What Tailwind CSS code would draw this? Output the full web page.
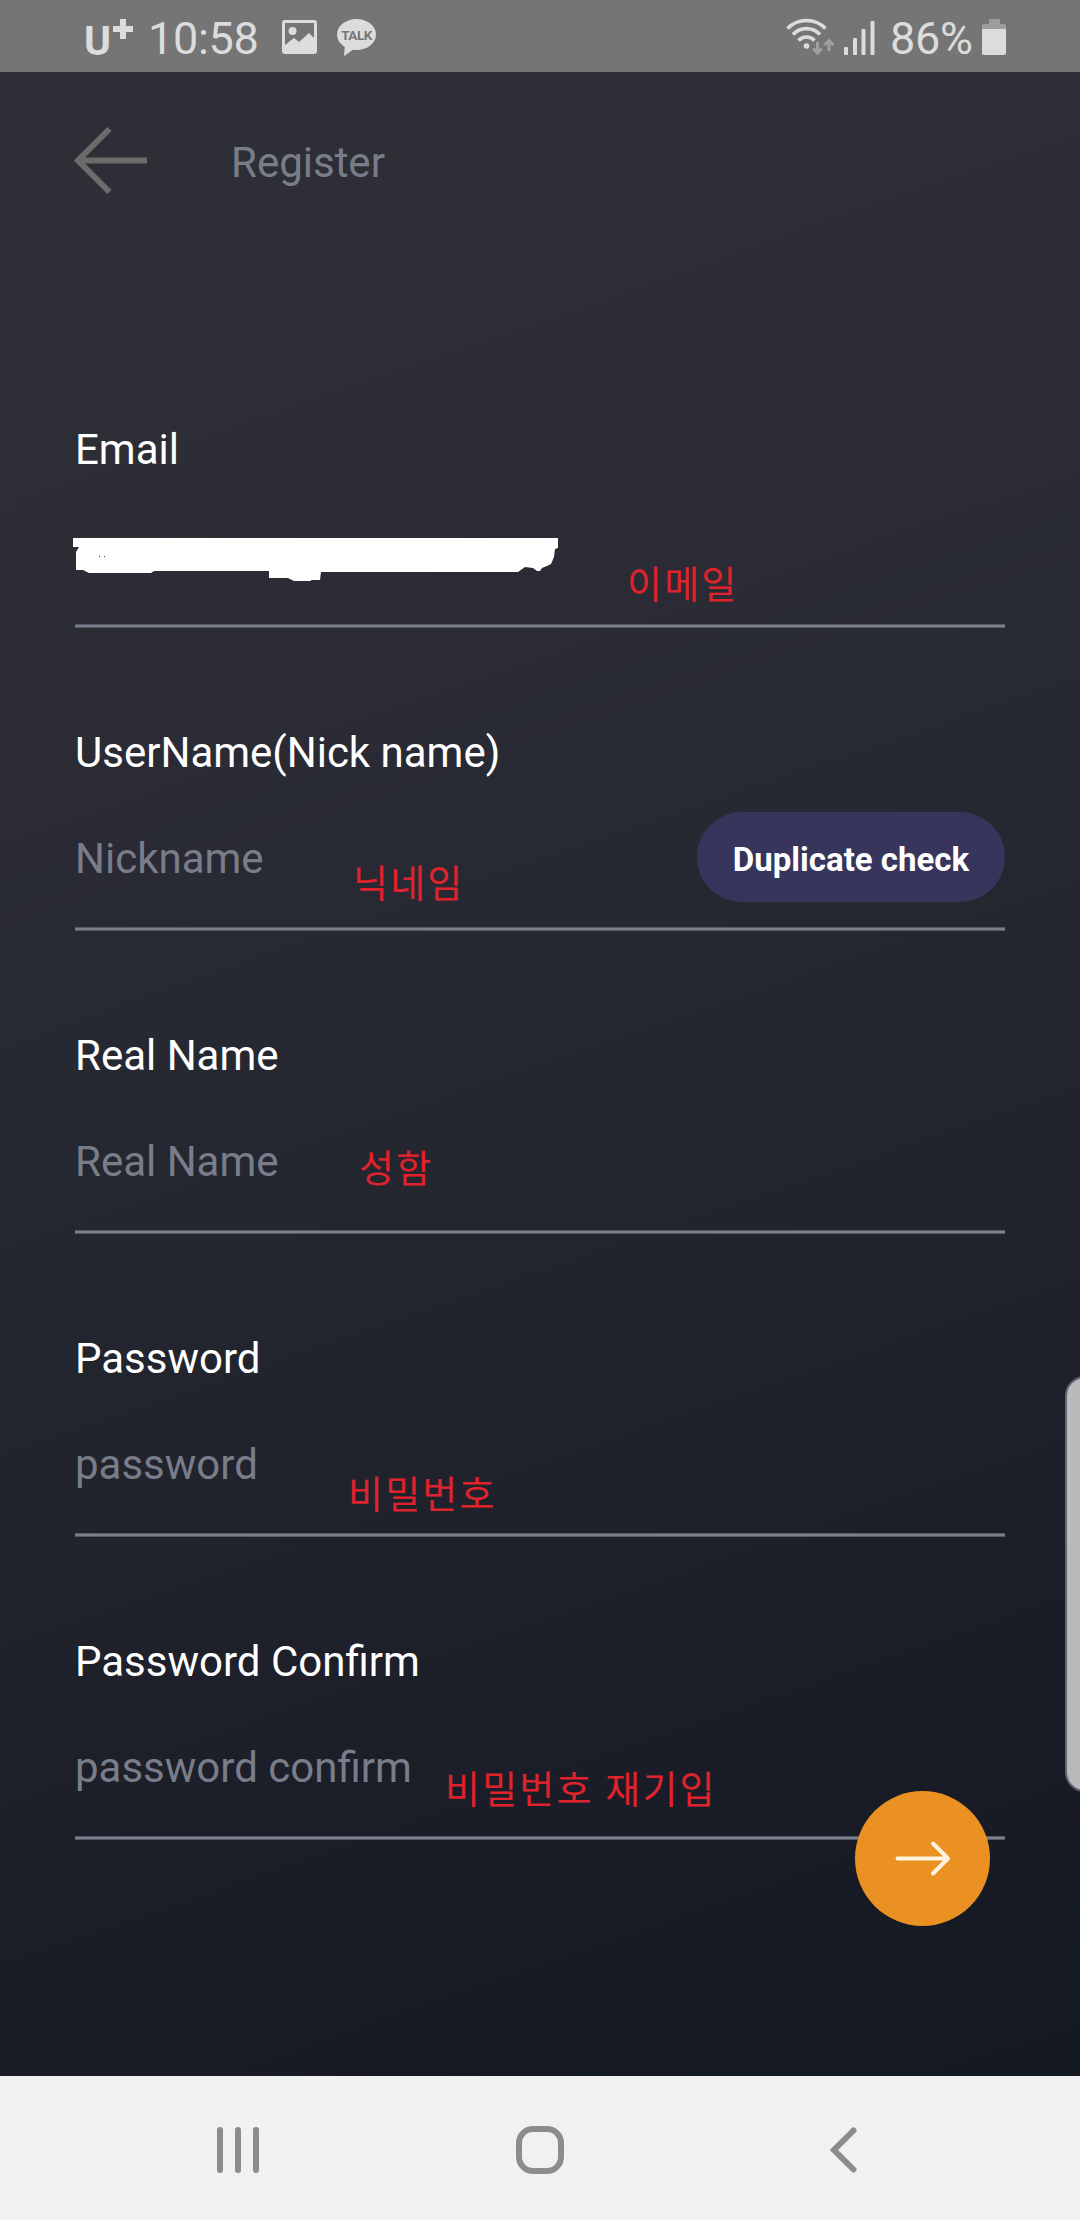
<!DOCTYPE html>
<html lang="ko">
<head>
    <meta charset="UTF-8">
    <title>Register</title>
    <script src="https://cdn.jsdelivr.net/npm/@tailwindcss/browser@4"></script>
</head>
<body class="font-['Roboto','Noto_Sans_CJK_KR',sans-serif]">
    <div class="relative flex flex-col w-[1080px] h-[2220px] overflow-hidden bg-[linear-gradient(161deg,#2f2f38_0%,#2d2d36_22%,#272932_42%,#20222c_62%,#191c26_80%,#121720_100%)]">
        <!-- Status bar -->
        <div class="flex items-start justify-between h-[72px] shrink-0 bg-[#757575] text-[#dcdcdc] pl-[84px] pr-[74px]">
            <div class="flex items-start">
                <div class="relative w-[64px] h-[72px]">
                    <span class="block pt-[13px] text-[41px] leading-[56px] font-bold">U</span>
                    <svg class="absolute left-[29px] top-[19px]" width="20" height="20" fill="#dcdcdc"><path d="M7 0h6v7h7v6h-7v7H7v-7H0V7h7z"/></svg>
                </div>
                <span class="pt-[11px] w-[134px] text-[45px] leading-[56px] tracking-[-0.3px] whitespace-nowrap">10:58</span>
                <!-- Picture icon -->
                <svg class="mt-5" width="35" height="34" viewBox="0 0 35 34">
                    <path fill="#dcdcdc" fill-rule="evenodd" d="M3 0h29a3 3 0 0 1 3 3v28a3 3 0 0 1-3 3H3a3 3 0 0 1-3-3V3a3 3 0 0 1 3-3zM3 3v22l9-7 5 4 10-9 5 5V3z"/>
                    <circle cx="10.500" cy="11" r="4" fill="#dcdcdc"/>
                </svg>
                <!-- Talk bubble -->
                <div class="relative ml-[20px] mt-[19px] w-[39px] h-[38px]">
                    <svg width="39" height="38" fill="#dcdcdc"><ellipse cx="19.500" cy="15.500" rx="19.500" ry="15.500"/><path d="M8 26L7 37l10-7z"/></svg>
                    <span class="absolute left-0 top-[8px] w-[39px] text-center text-[13.5px] leading-4 font-bold tracking-[-0.5px] text-[#757575]">TALK</span>
                </div>
            </div>
            <div class="flex items-start">
                <!-- Wifi with traffic arrows -->
                <svg width="50" height="60" viewBox="785 0 50 60" fill="none">
                    <g stroke="#dcdcdc" stroke-width="3.600">
                        <path d="M787.500 28.500a26.500 26.500 0 0 1 38 0"/>
                        <path d="M793 34.500a18.500 18.500 0 0 1 27 0"/>
                        <path d="M798.500 40.500a11 11 0 0 1 16 0"/>
                    </g>
                    <circle cx="806.500" cy="46" r="2.800" fill="#dcdcdc"/>
                    <g stroke="#a0a0a0" stroke-width="3">
                        <path d="M817.500 42v11M813.300 48.500l4.200 4.500 4.200-4.500"/>
                        <path d="M829 51V40.500M824.500 45l4.500-4.500 4.500 4.500"/>
                    </g>
                </svg>
                <!-- Signal bars -->
                <svg class="ml-[9px]" width="31" height="60" fill="#dcdcdc">
                    <rect x="0" y="47" width="4" height="8" rx="1"/>
                    <rect x="9" y="38" width="4" height="17" rx="1"/>
                    <rect x="17.500" y="29" width="4" height="26" rx="1"/>
                    <rect x="26.500" y="21" width="4" height="34" rx="1"/>
                </svg>
                <span class="pt-[11px] ml-[15px] w-[92px] text-[45px] leading-[56px] tracking-[-0.3px] whitespace-nowrap">86%</span>
                <svg class="mt-[19px]" width="24" height="36">
                    <path fill="#9d9d9d" d="M7 0h11v5h4a2 2 0 0 1 2 2v4H0V7a2 2 0 0 1 2-2h5z"/>
                    <path fill="#dcdcdc" d="M0 10h24v24a2 2 0 0 1-2 2H2a2 2 0 0 1-2-2z"/>
                </svg>
            </div>
        </div>

        <!-- Header with the back arrow -->
        <div class="flex items-start h-[253px] shrink-0 pl-[73px]">
            <svg class="mt-[53px]" width="75" height="72" viewBox="0 0 75 72" fill="none" stroke="#6b6b6a" stroke-width="6"><path d="M74 35.500H6M36.500 4L5 35.500 36.500 67"/></svg>
            <h1 class="ml-[83px] mt-[66px] text-[42px] leading-[50px] text-[#797d89]">Register</h1>
        </div>

        <!-- Form fields -->
        <div class="flex flex-col px-[75px] flex-1">
            <div class="relative h-[303px] pt-[100px]">
                <label class="block text-[42px] leading-[50px] text-white">Email</label>
                <div class="mt-[34px] h-[90px]">
                    <!-- Scribbled out address -->
                    <svg class="relative left-[-2px] top-[29px]" width="485" height="44" fill="#fff">
                        <path d="M0 0h485v10l-3 1-1 8-3 7-4 2-5 2-2 3h-3l-4-3-8-1-7 5H248l-1 8h-9v1h-17l-6-3h-19v-7H81l-3 2H16l-6-3H3V14l3-5H0z"/>
                        <path fill="#333" d="M26 18h1v1h-1zM31 18h1v1h-1z"/>
                    </svg>
                </div>
                <div class="mt-[25px] h-1 bg-[#7b7f8c] border-y border-[#565a66]"></div>
                <span class="absolute left-[552px] top-[232px] text-[38px] leading-[56px] font-normal tracking-[2.2px] text-[#e0222c]">이메일</span>
            </div>
            <div class="relative h-[303px] pt-[100px]">
                <label class="block text-[42px] leading-[50px] text-white">UserName(Nick name)</label>
                <div class="mt-[34px] h-[90px] flex items-center justify-between">
                    <span class="pt-1 text-[42px] leading-[50px] text-[#797d89]">Nickname</span>
                    <button class="w-[308px] h-[90px] pt-1.5 rounded-full bg-[#37355c] text-white text-[33px] font-bold">Duplicate check</button>
                </div>
                <div class="mt-[25px] h-1 bg-[#7b7f8c] border-y border-[#565a66]"></div>
                <span class="absolute left-[278px] top-[228px] text-[38px] leading-[56px] font-normal tracking-[2.2px] text-[#e0222c]">닉네임</span>
            </div>
            <div class="relative h-[303px] pt-[100px]">
                <label class="block text-[42px] leading-[50px] text-white">Real Name</label>
                <div class="mt-[34px] h-[90px] flex items-center">
                    <span class="pt-1 text-[42px] leading-[50px] text-[#797d89]">Real Name</span>
                </div>
                <div class="mt-[25px] h-1 bg-[#7b7f8c] border-y border-[#565a66]"></div>
                <span class="absolute left-[284px] top-[210px] text-[38px] leading-[56px] font-normal tracking-[2.2px] text-[#e0222c]">성함</span>
            </div>
            <div class="relative h-[303px] pt-[100px]">
                <label class="block text-[42px] leading-[50px] text-white">Password</label>
                <div class="mt-[34px] h-[90px] flex items-center">
                    <span class="pt-1 text-[42px] leading-[50px] text-[#797d89]">password</span>
                </div>
                <div class="mt-[25px] h-1 bg-[#7b7f8c] border-y border-[#565a66]"></div>
                <span class="absolute left-[273px] top-[233px] text-[38px] leading-[56px] font-normal tracking-[2.2px] text-[#e0222c]">비밀번호</span>
            </div>
            <div class="relative h-[303px] pt-[100px]">
                <label class="block text-[42px] leading-[50px] text-white">Password Confirm</label>
                <div class="mt-[34px] h-[90px] flex items-center">
                    <span class="pt-1 text-[42px] leading-[50px] text-[#797d89]">password confirm</span>
                </div>
                <div class="mt-[25px] h-1 bg-[#7b7f8c] border-y border-[#565a66]"></div>
                <span class="absolute left-[370px] top-[225px] text-[38px] leading-[56px] font-normal tracking-[2.2px] text-[#e0222c] whitespace-nowrap">비밀번호 재기입</span>
            </div>
        </div>

        <!-- Next button -->
        <button class="absolute left-[855px] top-[1791px] size-[135px] rounded-full bg-[#eb9123]">
            <svg width="135" height="135" fill="none" stroke="#fff5df" stroke-width="4" stroke-linecap="round" stroke-linejoin="round"><path d="M42.500 67.500H93M78 52.500l15 15-15 15"/></svg>
        </button>

        <!-- Edge panel handle -->
        <div class="absolute left-[1065px] top-[1376px] w-[40px] h-[416px] rounded-[20px] border-2 border-[#66666d] bg-[#b9babe]"></div>

        <!-- Navigation bar -->
        <div class="flex items-center justify-between h-[144px] shrink-0 bg-[#f1f1f1] pt-1 pl-[217px] pr-[223px]">
            <svg width="42" height="46" fill="#8c8c8c">
                <rect x="0" width="6" height="46" rx="3"/>
                <rect x="18" width="6" height="46" rx="3"/>
                <rect x="36" width="6" height="46" rx="3"/>
            </svg>
            <div class="ml-[-8px] size-12 rounded-[17px] border-6 border-[#8c8c8c]"></div>
            <svg width="28" height="46" fill="none" stroke="#8c8c8c" stroke-width="6" stroke-linecap="round"><path d="M24.500 3.500L5 23l19.500 19.500"/></svg>
        </div>
    </div>
</body>
</html>
